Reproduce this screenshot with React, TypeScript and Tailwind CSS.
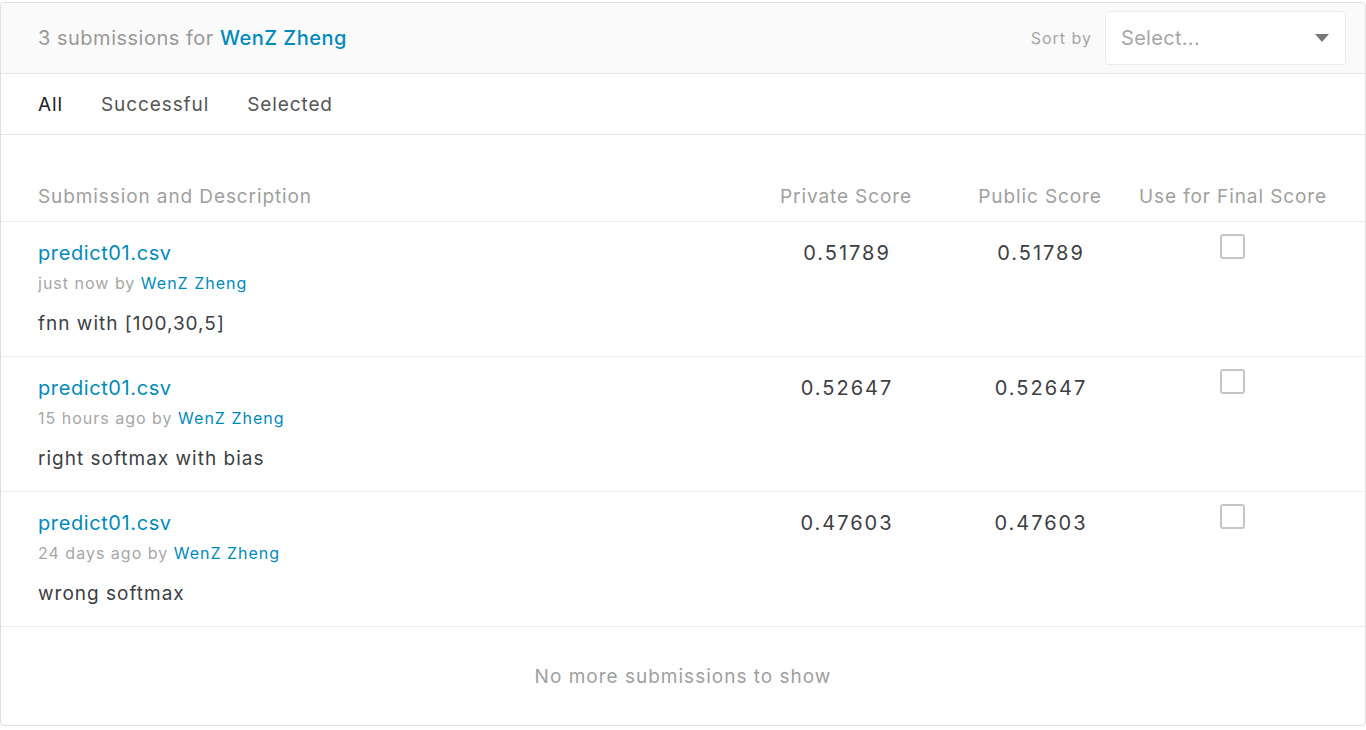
import React from 'react';

const rows = [
  { file: 'predict01.csv', when: 'just now', score: '0.51789', desc: 'fnn with [100,30,5]' },
  { file: 'predict01.csv', when: '15 hours ago', score: '0.52647', desc: 'right softmax with bias' },
  { file: 'predict01.csv', when: '24 days ago', score: '0.47603', desc: 'wrong softmax' },
];

const App: React.FC = () => {
  return (
    <div className="h-[730px] bg-white pt-[2px] font-['Inter',sans-serif]">
      <div className="h-[724px] rounded-[4px] border border-[#dedfe0] bg-white overflow-hidden flex flex-col">
        {/* header */}
        <div className="h-[71px] shrink-0 bg-[#fafafa] border-b border-[#e6e6e6] flex items-center justify-between pl-[37px] pr-[19px]">
          <div className="text-[20px] text-[#999] tracking-[0.5px]">
            3 submissions for <span className="text-[#008abc] font-medium">WenZ Zheng</span>
          </div>
          <div className="flex items-center gap-[13px]">
            <span className="text-[16px] text-[#a6a6a6] tracking-[1px]">Sort by</span>
            <div className="w-[241px] h-[54px] rounded-[4px] border border-[#ececec] bg-white flex items-center justify-between pl-[15px] pr-[16px]">
              <span className="text-[20px] text-[#a6a6a6] tracking-[0.3px]">Select...</span>
              <svg width="14" height="8" viewBox="0 0 14 8">
                <path d="M0 0 L14 0 L7 8 Z" fill="#777" />
              </svg>
            </div>
          </div>
        </div>

        {/* tabs */}
        <div className="h-[61px] shrink-0 border-b border-[#e6e6e6] flex items-center gap-[38px] pl-[37px] pt-[2px] text-[19px] tracking-[0.9px]">
          <span className="text-[#202124]">All</span>
          <span className="text-[#555]">Successful</span>
          <span className="text-[#555]">Selected</span>
        </div>

        {/* table header */}
        <div className="mt-[31px] h-[56px] shrink-0 border-b border-[#ececec] flex items-center pt-[7px] pr-[32px] text-[19px] text-[#a0a0a0] tracking-[0.9px]">
          <div className="flex-1 pl-[37px]">Submission and Description</div>
          <div className="w-[202px] text-center">Private Score</div>
          <div className="w-[186px] text-center">Public Score</div>
          <div className="w-[200px] text-center whitespace-nowrap">Use for Final Score</div>
        </div>

        {rows.map((r, i) => (
          <div key={i} className="h-[135px] shrink-0 border-b border-[#ececec] flex pt-[17px] pr-[32px]">
            <div className="flex-1 pl-[37px]">
              <div className="text-[20px] text-[#008abc] leading-[28px] tracking-[0.6px]">{r.file}</div>
              <div className="text-[16px] text-[#a6a6a6] leading-[22px] mt-[5px] tracking-[1px]">
                {r.when} by <span className="text-[#008abc]">WenZ Zheng</span>
              </div>
              <div className="text-[19px] text-[#3c4043] leading-[26px] mt-[17px] tracking-[1px]">{r.desc}</div>
            </div>
            <div className="w-[202px] text-center text-[20px] text-[#3c4043] leading-[28px] tracking-[2px] pl-[2px]">{r.score}</div>
            <div className="w-[186px] text-center text-[20px] text-[#3c4043] leading-[28px] tracking-[2px] pl-[2px]">{r.score}</div>
            <div className="w-[200px] flex justify-center">
              <div className="w-[25px] h-[25px] rounded-[3px] border-2 border-[#c4c6c8] bg-white -mt-[5px] -ml-[2px]" />
            </div>
          </div>
        ))}

        <div className="flex-1 flex items-center justify-center text-[19px] text-[#a0a0a0] tracking-[1px] pt-[2px]">
          No more submissions to show
        </div>
      </div>
    </div>
  );
};

export default App;
